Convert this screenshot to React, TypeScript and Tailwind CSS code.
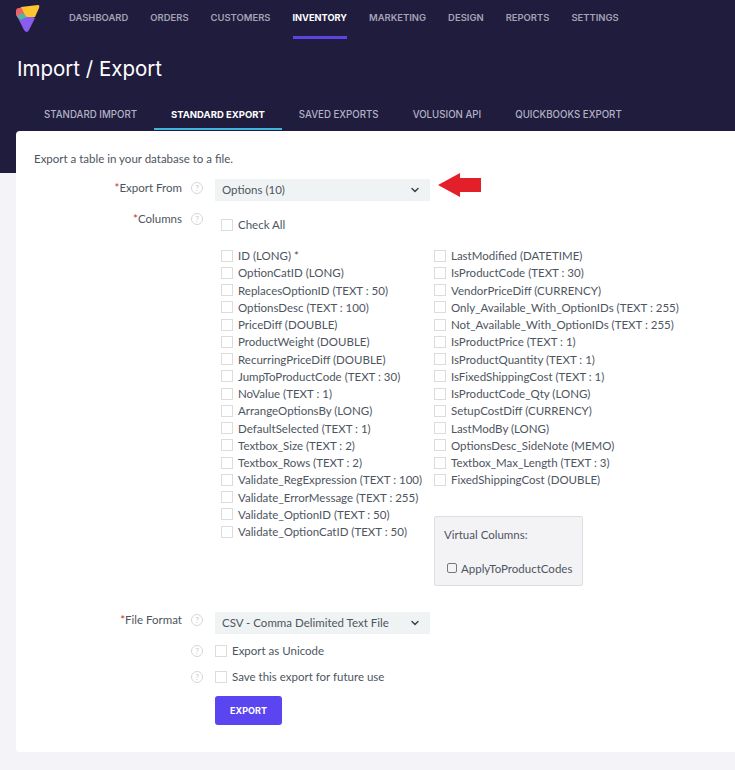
import { ChevronDown } from 'lucide-react';

const navItems = ['DASHBOARD', 'ORDERS', 'CUSTOMERS', 'INVENTORY', 'MARKETING', 'DESIGN', 'REPORTS', 'SETTINGS'];
const tabs = ['STANDARD IMPORT', 'STANDARD EXPORT', 'SAVED EXPORTS', 'VOLUSION API', 'QUICKBOOKS EXPORT'];

const leftColumns = [
   'ID (LONG) *',
   'OptionCatID (LONG)',
   'ReplacesOptionID (TEXT : 50)',
   'OptionsDesc (TEXT : 100)',
   'PriceDiff (DOUBLE)',
   'ProductWeight (DOUBLE)',
   'RecurringPriceDiff (DOUBLE)',
   'JumpToProductCode (TEXT : 30)',
   'NoValue (TEXT : 1)',
   'ArrangeOptionsBy (LONG)',
   'DefaultSelected (TEXT : 1)',
   'Textbox_Size (TEXT : 2)',
   'Textbox_Rows (TEXT : 2)',
   'Validate_RegExpression (TEXT : 100)',
   'Validate_ErrorMessage (TEXT : 255)',
   'Validate_OptionID (TEXT : 50)',
   'Validate_OptionCatID (TEXT : 50)',
];

const rightColumns = [
   'LastModified (DATETIME)',
   'IsProductCode (TEXT : 30)',
   'VendorPriceDiff (CURRENCY)',
   'Only_Available_With_OptionIDs (TEXT : 255)',
   'Not_Available_With_OptionIDs (TEXT : 255)',
   'IsProductPrice (TEXT : 1)',
   'IsProductQuantity (TEXT : 1)',
   'IsFixedShippingCost (TEXT : 1)',
   'IsProductCode_Qty (LONG)',
   'SetupCostDiff (CURRENCY)',
   'LastModBy (LONG)',
   'OptionsDesc_SideNote (MEMO)',
   'Textbox_Max_Length (TEXT : 3)',
   'FixedShippingCost (DOUBLE)',
];

const Logo = () => (
   <svg width="25" height="28" viewBox="0 0 25 28">
      <path d="M1 9 L9 25 Q12 29 14 25 L20 13 L9 8 Z" fill="#8a5cf0" />
      <path d="M1 10 L1 6 Q1 3 4 3 L8 2 L12 10 L6 12 L3 13 Z" fill="#f0606a" />
      <path d="M6 2 L23 0 Q25 0 24 3 L20 12 L11 12 Z" fill="#fdc62e" />
      <path d="M2 11 L7 8 L12 12 L5 15 Z" fill="#4fb89c" />
   </svg>
);

const Help = () => (
   <span className="flex h-[12px] w-[12px] items-center justify-center rounded-full border border-[#d5d9d5] text-[8px] leading-none text-[#c9cdc9]">
      ?
   </span>
);

const Box = () => <span className="h-[12px] w-[12px] shrink-0 border border-[#dcdcdc] bg-white" />;

const Check = ({ label }: { label: string }) => (
   <div className="flex h-[17.25px] items-center gap-[5px] whitespace-nowrap">
      <Box />
      <span>{label}</span>
   </div>
);

const Select = ({ label }: { label: string }) => (
   <div className="flex h-[22px] w-[215px] items-center justify-between bg-[#f0f3f3] pl-[7px] pr-[9px]">
      <span>{label}</span>
      <ChevronDown size={12} strokeWidth={3} className="text-[#3f4650]" />
   </div>
);

const Label = ({ text }: { text?: string }) => (
   <div className="flex w-[199px] shrink-0 items-center justify-end gap-[9px] pr-[12px]">
      {text && (
         <span>
            <span className="text-[#d0312d]">*</span>
            {text}
         </span>
      )}
      <Help />
   </div>
);

export default function App() {
   return (
      <div className="h-[770px] w-[735px] overflow-hidden bg-[#f3f3f8] font-['Lato',sans-serif] text-[11.5px] text-[#4e5560]">
         <header className="h-[173px] bg-[#1f1c3d]">
            <div className="flex h-[39px] items-start pl-[15px]">
               <div className="mr-[29px] mt-[5px]">
                  <Logo />
               </div>
               <nav className="flex gap-[22px] font-['Inter',sans-serif] text-[9.45px] font-semibold text-[#a4a3b5]">
                  {navItems.map((item) => (
                     <div
                        key={item}
                        className={
                           item === 'INVENTORY'
                              ? 'h-[39px] border-b-[3px] border-[#5b45e0] pt-[11px] text-[9.2px] font-bold text-white'
                              : 'h-[39px] pt-[11px]'
                        }
                     >
                        {item}
                     </div>
                  ))}
               </nav>
            </div>
            <h1 className="mt-[14px] pl-[17px] font-['Inter',sans-serif] text-[20.5px] leading-[32px] text-white">
               Import / Export
            </h1>
            <div className="mt-[14px] flex pl-[27px] font-['Inter',sans-serif] text-[9.7px] font-medium text-[#b4b3c4]">
               {tabs.map((tab) => (
                  <div
                     key={tab}
                     className={
                        tab === 'STANDARD EXPORT'
                           ? 'h-[31px] whitespace-nowrap border-b-[2px] border-[#3fb4dc] px-[17px] pt-[9px] text-[9.5px] font-bold text-white'
                           : 'h-[31px] whitespace-nowrap px-[17px] pt-[9px]'
                     }
                  >
                     {tab}
                  </div>
               ))}
            </div>
         </header>

         <main className="relative -mt-[42px] ml-[16px] h-[621px] rounded-tl-[4px] rounded-bl-[4px] bg-white pl-[18px] pt-[20px]">
            <p className="leading-[15px]">Export a table in your database to a file.</p>

            <div className="-ml-[18px] mt-[13px] flex items-start">
               <div className="flex h-[17px] items-center">
                  <Label text="Export From" />
               </div>
               <Select label="Options (10)" />
               <svg width="44" height="24" viewBox="0 0 44 24" className="ml-[8px] -mt-[6px]">
                  <path d="M0 12 L22 0 L22 5 L43 5 L43 19 L22 19 L22 24 Z" fill="#e3202a" />
               </svg>
            </div>

            <div className="-ml-[18px] mt-[9px] flex items-start">
               <div className="flex h-[17px] items-center">
                  <Label text="Columns" />
               </div>
               <div className="pl-[6px]">
                  <div className="flex h-[17px] translate-y-[6px] items-center gap-[5px]">
                     <Box />
                     <span>Check All</span>
                  </div>
                  <div className="mt-[20px] flex">
                     <div className="w-[213px]">
                        {leftColumns.map((c) => (
                           <Check key={c} label={c} />
                        ))}
                     </div>
                     <div>
                        {rightColumns.map((c) => (
                           <Check key={c} label={c} />
                        ))}
                        <div className="mt-[27px] h-[70px] w-[149px] rounded-[2px] border border-[#dedee2] bg-[#f3f3f6] pl-[9px] pt-[9px]">
                           <div>Virtual Columns:</div>
                           <div className="mt-[17px] ml-[3px] flex items-center gap-[4px]">
                              <span className="h-[10px] w-[10px] rounded-[2px] border border-[#777]" />
                              <span>ApplyToProductCodes</span>
                           </div>
                        </div>
                     </div>
                  </div>
               </div>
            </div>

            <div className="-ml-[18px] mt-[26px] flex items-start">
               <div className="flex h-[17px] items-center">
                  <Label text="File Format" />
               </div>
               <Select label="CSV - Comma Delimited Text File" />
            </div>

            <div className="-ml-[18px] mt-[9px] flex h-[17px] items-center">
               <Label />
               <div className="flex items-center gap-[5px]">
                  <Box />
                  <span>Export as Unicode</span>
               </div>
            </div>

            <div className="-ml-[18px] mt-[9px] flex h-[17px] items-center">
               <Label />
               <div className="flex items-center gap-[5px]">
                  <Box />
                  <span>Save this export for future use</span>
               </div>
            </div>

            <button className="ml-[181px] mt-[10px] flex h-[29px] w-[67px] items-center justify-center rounded-[3px] bg-[#5b45f0] pt-[1px] font-['Inter',sans-serif] text-[9px] font-bold text-white">
               EXPORT
            </button>
         </main>
      </div>
   );
}
